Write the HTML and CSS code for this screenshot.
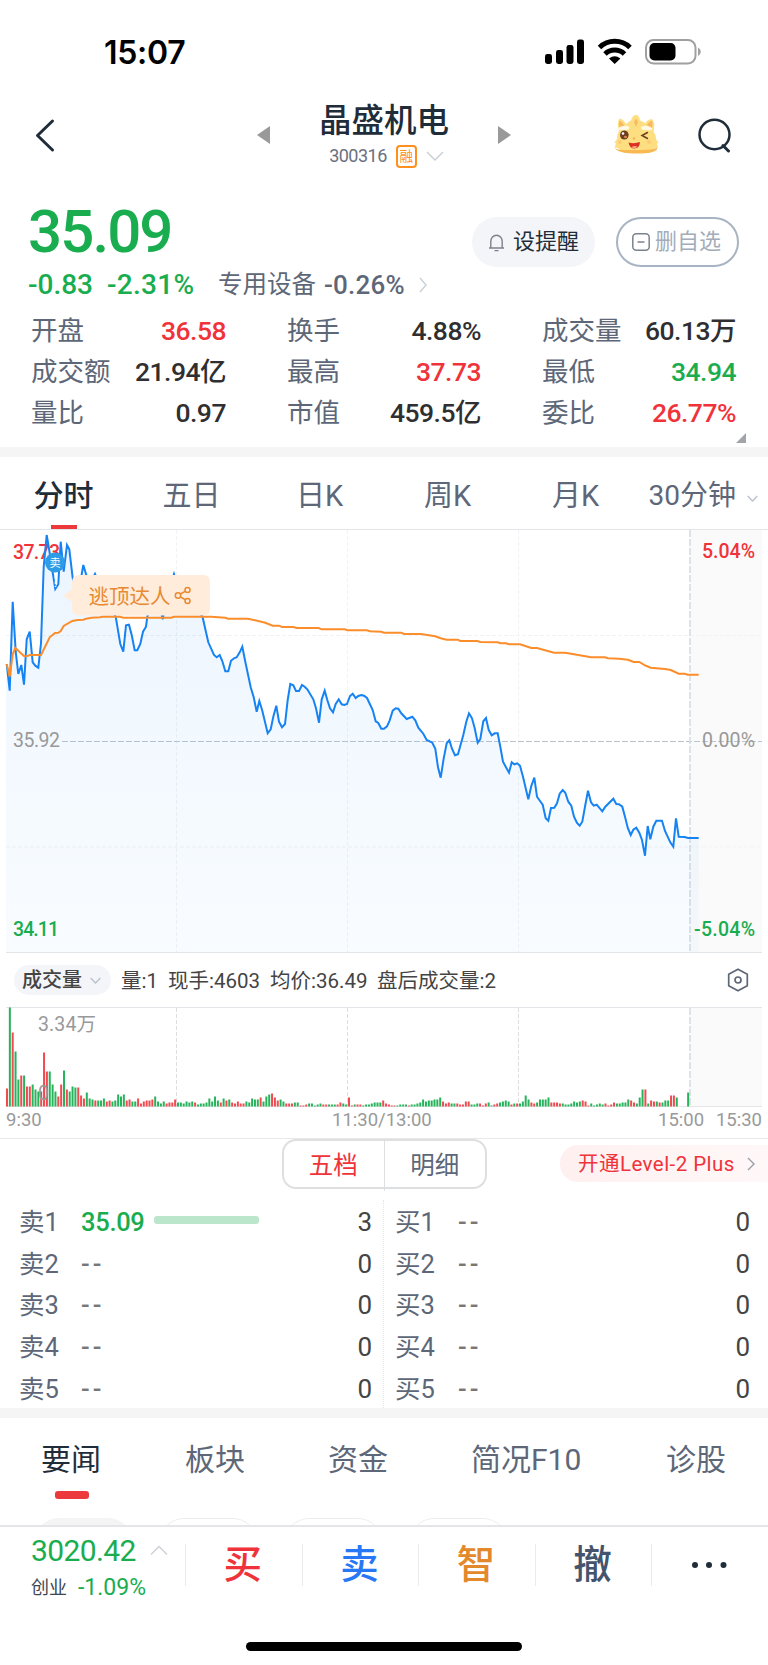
FILE: index.html
```html
<!DOCTYPE html>
<html lang="zh-CN">
<head>
<meta charset="utf-8">
<title>晶盛机电 300316</title>
<link rel="stylesheet" href="styles.css">
</head>
<body>
<div class="screen">
  <div class="statusbar">
    <span class="clock">15:07</span>
    <svg class="status-icons" width="160" height="30" viewBox="542 36 160 30">
      <g fill="#000"><rect x="545" y="54" width="7" height="10" rx="2.4"/><rect x="556" y="50" width="7" height="14" rx="2.4"/><rect x="566.500" y="45" width="7" height="19" rx="2.400"/><rect x="577" y="39.500" width="7" height="24.500" rx="2.400"/></g>
      <g fill="none" stroke="#000" stroke-width="5"><path d="M599.500 47.500a22 22 0 0 1 30.500 0"/><path d="M605 54a14 14 0 0 1 19.500 0"/></g>
      <path d="M609 58.500q5.700-4.600 11.400 0l-5.700 5.500z"/>
      <rect x="646" y="40" width="49.500" height="23.500" rx="7.500" fill="none" stroke="#a0a0a0" stroke-width="2"/>
      <rect x="649.500" y="43" width="26" height="17.500" rx="4.800"/>
      <path d="M698 47.500q2.800 1.400 2.800 4.200t-2.800 4.200z" fill="#a0a0a0"/>
    </svg>
  </div>

  <div class="navbar">
    <svg class="back" width="24" height="36" viewBox="34 118 24 36"><path d="M52.500 121 37.500 135.500 52.500 150" fill="none" stroke="#1f2d3a" stroke-width="3" stroke-linecap="round" stroke-linejoin="round"/></svg>
    <svg class="tri" width="13" height="18" viewBox="0 0 13 18"><path d="M13 0v18L0 9z" fill="#999"/></svg>
    <div class="name">
      <div class="title">晶盛机电</div>
      <div class="code"><span>300316</span><span class="rong">融</span><svg width="18" height="10" viewBox="0 0 18 10"><path d="M1 1l8 8 8-8" fill="none" stroke="#ccd1d8" stroke-width="1.500"/></svg></div>
    </div>
    <svg class="tri" width="13" height="18" viewBox="0 0 13 18"><path d="M0 0v18l13-9z" fill="#999"/></svg>
    <svg class="dragon" width="48" height="42" viewBox="612 114 48 42">
      <path d="M619 119c3-1 5 2 7 5 2-1.500 3.500-3 5-3.500 1-3.500 2.500-5.500 5-5.500s3.500 2.500 4 5.500c2 .5 4 1.500 5 3 2-3 4.500-5 7.500-4 2.500 4 2 8 1 12 2 2.500 2.500 5 2.500 7.500l2.500 3.500-1.500 1 1 4-3 .5c-4 4-11 4.500-19 4.500s-15-.5-18-4.500l-3.500-.5 1.500-4-1.500-1 2.500-3.500c0-3 .5-5.500 2-8-1.500-4-1.500-8 0-12z" fill="#fddf82"/>
      <path d="M614.500 148.500c5 2 12 1.500 21 1.500s17 0 22-2.500l-1 2.500c-5 3.500-12 3.500-20.500 3.500s-16-.5-21.500-5z" fill="#f9b952"/>
      <path d="M619.500 120.500c2.500 1 3.500 3 4.500 5l-4 3.500c-1-3-1.500-6-.5-8.500zM652 120.500c-2.500 1-4 2.500-5 4.500l4.500 4c1-3 1.500-6 .5-8.500zM636 118.500l2 3.500-2 5-2-5z" fill="#f8ba60"/>
      <path d="M618 129c1.500-3 8-4 11-2.500 1.500 2-1 4-3.500 3.500-3-.5-6 1.500-7.500-1zM652.500 129c-1.500-3-8-4-11-2.500-1.500 2 1 4 3.500 3.500 3-.5 6 1.500 7.500-1z" fill="#fff8e2"/>
      <ellipse cx="624.300" cy="135" rx="4.300" ry="4.500" fill="#6e3d22"/><circle cx="623" cy="133.500" r="1.300" fill="#fff"/><ellipse cx="625.500" cy="137" rx="1.500" ry="1.200" fill="#d98a58"/>
      <path d="M647.500 132.500l-5.500 3 5.500 3" fill="none" stroke="#684022" stroke-width="1.500" stroke-linecap="round"/>
      <path d="M628.500 142.500q6 1.500 11.500-.5-.5 6.500-5.500 6.500t-6-6z" fill="#d93222"/><path d="M631.500 147q3-1.500 6-.5-3 3.500-6 .5z" fill="#ff9c8c"/>
      <circle cx="620" cy="142" r="2" fill="#ffc978"/><circle cx="649" cy="142" r="2" fill="#ffc978"/><circle cx="634" cy="138.500" r="1.200" fill="#f9ae5e"/>
    </svg>
    <svg class="search" width="34" height="36" viewBox="698 117 34 36"><ellipse cx="714.500" cy="134.500" rx="15" ry="14.700" fill="none" stroke="#1f2d3a" stroke-width="2.500"/><path d="M723 145.500l5.500 5.500" stroke="#1f2d3a" stroke-width="3" stroke-linecap="round"/></svg>
  </div>

  <div class="quote">
    <div class="quote-main">
      <div class="price">35.09</div>
      <div class="change"><span class="d1">-0.83</span><span class="d2">-2.31%</span><span class="sector">专用设备</span><span class="sector-num">-0.26%</span><svg width="8" height="16" viewBox="0 0 8 16"><path d="M1 1l6 7-6 7" fill="none" stroke="#ccd1d8" stroke-width="1.500"/></svg></div>
    </div>
    <div class="actions">
      <div class="pill alert"><svg width="17" height="19" viewBox="0 0 17 19"><path d="M1 15h15M2.800 15V8.500a5.700 6.300 0 0 1 11.400 0V15M6.500 17.600h4" fill="none" stroke="#7c828d" stroke-width="1.400"/></svg><span>设提醒</span></div>
      <div class="pill remove"><svg width="18" height="18" viewBox="0 0 18 18"><rect x=".8" y=".8" width="16.400" height="16.400" rx="3.500" fill="none" stroke="#7c828d" stroke-width="1.500"/><path d="M5.500 9h7" stroke="#7c828d" stroke-width="1.500"/></svg><span>删自选</span></div>
    </div>
  </div>

  <div class="stats">
    <div class="stat"><span>开盘</span><b class="up">36.58</b></div><div class="stat"><span>换手</span><b>4.88%</b></div><div class="stat"><span>成交量</span><b>60.13万</b></div>
    <div class="stat"><span>成交额</span><b>21.94亿</b></div><div class="stat"><span>最高</span><b class="up">37.73</b></div><div class="stat"><span>最低</span><b class="down">34.94</b></div>
    <div class="stat"><span>量比</span><b>0.97</b></div><div class="stat"><span>市值</span><b>459.5亿</b></div><div class="stat"><span>委比</span><b class="up">26.77%</b></div>
  </div>
  <div class="corner"><svg width="10" height="10" viewBox="0 0 10 10"><path d="M10 0v10H0z" fill="#a1a4a8"/></svg></div>
  <div class="band"></div>

  <div class="ktabs">
    <span class="on">分时</span><span>五日</span><span>日K</span><span>周K</span><span>月K</span><span class="mins">30分钟</span><svg width="11" height="7" viewBox="0 0 11 7"><path d="M.7 1l4.800 5 4.800-5" fill="none" stroke="#b9c2cf" stroke-width="1.400"/></svg>
  </div>

  <svg class="chart" width="768" height="423" viewBox="0 530 768 423">
    <defs><linearGradient id="area" x1="0" y1="0" x2="0" y2="1"><stop offset="0" stop-color="#1a80f0" stop-opacity=".085"/><stop offset="1" stop-color="#2a9bff" stop-opacity=".03"/></linearGradient></defs>
    <rect x="690" y="530" width="66.500" height="423" fill="#fafafa"/><rect x="756" y="530" width="6" height="423" fill="#fafafa"/>
    <g stroke="#f1f3f5" stroke-width="1" stroke-dasharray="4 2"><path d="M6 635.500H762M6 847H762M176.500 530V953M347.500 530V953M518.500 530V953"/></g>
    <path d="M62 741.500H762" stroke="#bcc5cd" stroke-width="1.200" stroke-dasharray="6 2"/>
    <path d="M690 530V953" stroke="#d5dde5" stroke-width="1.600" stroke-dasharray="7 2"/>
    <path id="fill" fill="url(#area)"/>
    <rect x="6" y="952" width="756" height="1.500" fill="#e3e6e9"/>
    <g class="axis">
      <text class="t-up" x="13" y="558.500" textLength="47">37.73</text><text class="t-mute" x="13" y="747" textLength="47">35.92</text><text class="t-down" x="13" y="936" textLength="46">34.11</text>
    </g>
    <path id="price-line" fill="none" stroke="#1683f3" stroke-width="2"/>
    <path d="M55.500 571v16" stroke="#fff" stroke-width="1.500" stroke-dasharray="3 2"/>
    <circle cx="55" cy="562.500" r="10" fill="#2e9be6"/><text class="sell" x="49.500" y="567">卖</text>
    <path d="M63 595.500l9-6v-7q0-7.500 7-7.500h124q7 0 7 7v26.500q0 7-7 7H79q-7 0-7-7V601.500z" fill="#ffecdb"/>
    <text class="tip" x="88.500" y="604" textLength="82">逃顶达人</text>
    <g fill="none" stroke="#e78a31" stroke-width="1.500"><circle cx="178" cy="595.500" r="2.700"/><circle cx="187.500" cy="590" r="2.500"/><circle cx="187.500" cy="601" r="2.500"/><path d="M180.500 594l5-2.800M180.500 597l5 2.800"/></g>
    <path id="avg-line" fill="none" stroke="#fb8d2b" stroke-width="2"/>
    <g class="axis">
      <text class="t-up" x="702" y="558" textLength="53">5.04%</text><text class="t-mute" x="702" y="747" textLength="53">0.00%</text><text class="t-down" x="694" y="936" textLength="61">-5.04%</text>
    </g>
  </svg>

  <div class="volhead">
    <div class="volpick">成交量<svg width="11" height="7" viewBox="0 0 11 7"><path d="M.7 1l4.800 5 4.800-5" fill="none" stroke="#b9c2cf" stroke-width="1.400"/></svg></div>
    <span class="v1">量:1</span><span class="v2">现手:4603</span><span class="v3">均价:36.49</span><span class="v4">盘后成交量:2</span>
    <svg class="hex" width="22" height="24" viewBox="0 0 22 24"><path d="M11 1.200 20.300 6.200V17.800L11 22.800 1.700 17.800V6.200z" fill="none" stroke="#5d6778" stroke-width="1.700" stroke-linejoin="round"/><circle cx="11" cy="12" r="3" fill="none" stroke="#5d6778" stroke-width="1.700"/></svg>
  </div>
  <svg class="chart" width="768" height="100" viewBox="0 1007 768 100">
    <rect x="690" y="1007" width="72" height="100" fill="#fafafa"/>
    <path d="M6 1007.500H762M6 1106.500H762" stroke="#e3e5e8"/>
    <path d="M176.500 1008V1106M347.500 1008V1106M518.500 1008V1106" stroke="#dedede" stroke-dasharray="4 2"/>
    <path d="M690 1008V1106" stroke="#d5dde5" stroke-width="1.600" stroke-dasharray="7 2"/>
    <path id="vol-up" fill="#f04b51"/><path id="vol-down" fill="#27b35b"/>
    <g class="axis"><text class="t-mute" x="38" y="1031" textLength="58">3.34万</text><text class="t-mute" x="38" y="1099.500">0</text></g>
  </svg>
  <div class="times"><span>9:30</span><span>11:30/13:00</span><span class="end">15:00</span><span>15:30</span></div>

  <div class="book-head">
    <div class="seg"><span class="sel">五档</span><span>明细</span></div>
    <div class="level2">开通Level-2 Plus<svg width="8" height="14" viewBox="0 0 8 14"><path d="M1 1l6 6-6 6" fill="none" stroke="#9a9ea6" stroke-width="1.400"/></svg></div>
  </div>
  <div class="book">
    <div class="side ask">
      <div class="row"><span>卖1</span><b class="down">35.09</b><i class="depth"></i><em>3</em></div>
      <div class="row"><span>卖2</span><b>--</b><em>0</em></div>
      <div class="row"><span>卖3</span><b>--</b><em>0</em></div>
      <div class="row"><span>卖4</span><b>--</b><em>0</em></div>
      <div class="row"><span>卖5</span><b>--</b><em>0</em></div>
    </div>
    <div class="side bid">
      <div class="row"><span>买1</span><b>--</b><em>0</em></div>
      <div class="row"><span>买2</span><b>--</b><em>0</em></div>
      <div class="row"><span>买3</span><b>--</b><em>0</em></div>
      <div class="row"><span>买4</span><b>--</b><em>0</em></div>
      <div class="row"><span>买5</span><b>--</b><em>0</em></div>
    </div>
  </div>
  <div class="band"></div>

  <div class="ntabs"><span class="on">要闻</span><span>板块</span><span>资金</span><span>简况F10</span><span>诊股</span></div>
  <div class="chips"><i class="solid"></i><i></i><i></i><i></i></div>

  <div class="tradebar">
    <div class="index">
      <div class="index-top"><span>3020.42</span><svg width="18" height="10" viewBox="0 0 18 10"><path d="M1 9.500l8-8 8 8" fill="none" stroke="#ccd1d8" stroke-width="1.400"/></svg></div>
      <div class="index-sub"><span>创业</span><b>-1.09%</b></div>
    </div>
    <div class="act buy">买</div><div class="act sell-btn">卖</div><div class="act smart">智</div><div class="act cancel">撤</div>
    <div class="act more"><svg width="36" height="8" viewBox="0 0 36 8"><g fill="#1f2d3a"><circle cx="4" cy="4" r="3"/><circle cx="18" cy="4" r="3"/><circle cx="32.500" cy="4" r="3"/></g></svg></div>
  </div>
  <div class="home"></div>
</div>
<script src="chart.js"></script>
</body>
</html>
```
FILE: styles.css
```css
* { box-sizing: border-box; }
body { margin: 0; background: #fff; font-family: Roboto, "Noto Sans CJK SC", sans-serif; color: #333; }
svg { display: block; flex: none; }
b { font-weight: 500; }
i, em { font-style: normal; }
.screen { width: 768px; height: 1665px; overflow: hidden; display: flex; flex-direction: column; white-space: nowrap; }
.screen > * { flex: none; }

.statusbar { height: 100px; padding: 36px 66px 0 104px; display: flex; justify-content: space-between; align-items: flex-start; }
.clock { font: 600 32px/34px Inter, sans-serif; color: #000; letter-spacing: -0.3px; }

.navbar { height: 90px; display: flex; align-items: flex-start; padding-left: 34px; }
.back { margin-top: 18px; }
.tri { margin-top: 26px; }
.back + .tri { margin-left: 199px; }
.name { width: 228px; display: flex; flex-direction: column; align-items: center; }
.title { margin-top: 2px; font-size: 32.500px; line-height: 38px; font-weight: 500; color: #1f2d3a; }
.code { display: flex; align-items: center; margin: 4px 0 0 5px; height: 24px; gap: 9px; font-size: 18px; line-height: 24px; color: #6b7080; letter-spacing: -0.5px; }
.rong { width: 21px; height: 23px; border: 2px solid #ff8f1f; border-radius: 4px; font-size: 13.500px; line-height: 19px; text-align: center; color: #ff8f1f; letter-spacing: 0; display: flex; justify-content: center; }
.dragon { margin: 14px 0 0 101px; }
.search { margin: 17px 0 0 38px; }

.quote { height: 124px; display: flex; justify-content: space-between; padding: 0 29px 0 28px; }
.price { margin-top: 11px; height: 60px; font-size: 60px; line-height: 62px; font-weight: 500; letter-spacing: -1.900px; color: #1aad50; }
.change { display: flex; align-items: center; height: 32px; margin-top: 8px; line-height: 32px; font-size: 28px; color: #1aad50; font-weight: 500; }
.d1 { width: 79px; letter-spacing: 0; }
.d2 { width: 111px; letter-spacing: 0.3px; }
.sector { width: 106px; font-size: 24.500px; font-weight: 400; color: #5d6778; }
.sector-num { width: 95px; font-size: 26px; color: #5d6778; letter-spacing: 0.2px; }
.actions { display: flex; gap: 21px; margin-top: 27px; }
.pill { height: 50px; width: 123px; border-radius: 25px; display: flex; align-items: center; font-size: 22px; }
.pill span { line-height: 30px; margin-top: -1px; }
.alert { background: #f4f5f8; color: #1f2d3a; padding-left: 16px; gap: 8px; }
.remove { border: 2px solid #a9b4c2; color: #a3adba; padding-left: 14px; gap: 5px; }

.stats { display: grid; grid-template-columns: 195px 194px 194px; grid-auto-rows: 41px; column-gap: 61px; padding-left: 31px; margin-top: -4px; }
.stat { display: flex; justify-content: space-between; align-items: center; line-height: 43px; }
.stat span { font-size: 26.500px; color: #5d6778; }
.stat b { font-size: 26.500px; color: #2f2f31; letter-spacing: -0.5px; }
.stat b.up, .up { color: #f0333a; }
.stat b.down, .down { color: #1aad50; }
.corner { height: 14px; padding: 0 22px 0 0; display: flex; justify-content: flex-end; }
.band { height: 10px; background: #f5f5f5; }

.ktabs { height: 73px; display: grid; grid-template-columns: 128px 128px 128px 128px 128px 96px 12px; border-bottom: 1px solid #e3e5e8; font-size: 29px; line-height: 78px; text-align: center; color: #5d6778; }
.ktabs span { padding-right: 1px; }
.ktabs .on { color: #1f2d3a; font-weight: 500; font-size: 30px; display: flex; flex-direction: column; align-items: center; height: 72px; }
.ktabs .on::after { content: ""; width: 26px; height: 4px; background: #ec3a3c; margin-top: -10px; flex: none; }
.ktabs .mins { padding: 0; text-align: right; font-size: 28px; }
.ktabs svg { margin: 38px 0 0 11px; }

.axis text { font: 500 19.500px Roboto, "Noto Sans CJK SC", sans-serif; }
.axis .t-up { fill: #f0333a; }
.axis .t-down { fill: #1aad50; }
.axis .t-mute { fill: #999; font-weight: 400; }
.sell { font: 11px "Noto Sans CJK SC", sans-serif; fill: #fff; }
.tip { font: 20.500px "Noto Sans CJK SC", sans-serif; fill: #e78a31; }

.volhead { height: 54px; display: flex; align-items: center; padding-left: 14px; font-size: 20.500px; color: #444; line-height: 32px; }
.volpick { width: 97px; height: 30px; border-radius: 15px; background: #f4f5f8; padding-left: 8px; display: flex; align-items: center; gap: 8px; font-weight: 500; font-size: 20px; }
.volhead > span { margin: 1px 0 0 10px; }
.volhead .v1 { width: 37px; }
.volhead .v2 { width: 92px; }
.volhead .v3 { width: 97px; }
.volhead .v4 { width: 350px; }
.times { height: 32px; border-bottom: 1px solid #e8e8e8; display: grid; grid-template-columns: 326px 304px 68px 58px; padding: 0 0 3px 6px; font-size: 18.500px; line-height: 27px; color: #999; }
.times .end { padding-left: 22px; }
.times span:last-child { text-align: right; }

.book-head { height: 61px; display: flex; padding-left: 282px; }
.seg { width: 205px; height: 50px; border: 2px solid #dedfe1; border-radius: 14px; display: grid; grid-template-columns: 1fr 1fr; text-align: center; font-size: 24.500px; line-height: 50px; color: #5d6778; }
.seg .sel { color: #f0333a; border-right: 1px solid #dedfe1; padding-right: 1px; }
.level2 { margin: 6px 0 0 73px; width: 208px; height: 37px; border-radius: 18px 0 0 18px; background: linear-gradient(90deg, #fff0f0, #fff8f8); padding-left: 18px; display: flex; align-items: center; gap: 12px; font-size: 20.500px; line-height: 38px; color: #f0333a; font-weight: 400; letter-spacing: 0.45px; }
.book { display: grid; grid-template-columns: 384px 384px; height: 208px; }
.side { display: grid; grid-template-rows: repeat(5, 41.700px); }
.ask { padding: 0 11px 0 20px; border-right: 1px dotted #e4e6e9; }
.bid { padding: 0 18px 0 12px; }
.row { display: flex; align-items: center; font-size: 25.500px; line-height: 42px; padding-top: 2px; color: #5d6778; }
.row span { width: 61px; margin-left: -1px; }
.row b { width: 73px; letter-spacing: -0.3px; margin-left: 1px; }
.row b:not(.down) { font-weight: 500; letter-spacing: 3px; color: #777; }
.bid .row b { margin-left: 2px; }
.row em { margin-left: auto; color: #444; font-size: 26px; }
.depth { width: 105px; height: 8px; border-radius: 3px; background: #bce6cc; margin-top: -4px; }

.ntabs { height: 100px; display: grid; grid-template-columns: 144px 143px 143px 195px 102px; padding-left: 41px; font-size: 30px; line-height: 84px; color: #5d6778; }
.ntabs .on { color: #1f2d3a; font-weight: 400; }
.ntabs .on::after { content: ""; display: block; width: 34px; height: 8px; border-radius: 3px; background: #ec3a3c; margin: -11px 0 0 14px; }
.chips { height: 8px; overflow: hidden; display: flex; gap: 26px; padding-left: 34px; }
.chips i { width: 99px; height: 50px; flex: none; border: 1.500px solid #ededed; border-radius: 25px; }
.chips .solid { background: #f4f4f4; border-color: #f4f4f4; }

.tradebar { height: 107px; margin-top: -1px; border-top: 2px solid #e3e5e8; background: #fff; display: flex; padding-left: 31px; }
.index { width: 154px; color: #1aad50; }
.index-top { height: 46px; line-height: 47px; font-size: 30px; letter-spacing: -0.6px; display: flex; gap: 13px; }
.index-top span { width: 106px; }
.index-top svg { margin-top: 18px; }
.index-sub { display: flex; gap: 11px; font-size: 18px; line-height: 29px; color: #3d4655; }
.index-sub b { color: #1aad50; font-size: 23px; font-weight: 400; }
.act { width: 116.600px; height: 42px; margin-top: 17px; border-left: 1px solid #e9ebed; display: flex; align-items: center; justify-content: center; padding-right: 2px; font-size: 38.500px; line-height: 40px; font-weight: 500; }
.buy { color: #f0333a; }
.sell-btn { color: #2878f5; }
.smart { color: #e3882b; }
.cancel { color: #44546d; }
.home { width: 276px; height: 9px; border-radius: 5px; background: #000; margin: 10px auto 0 246px; }
```
FILE: chart.js
```js
const price = `6.7,664 9.7,690.7 12.7,601.7 15.7,651.7 18.3,674 21.3,665 24,684.7 26.7,639.3 29.7,631.7 32.7,662.3 35.3,665.7 38.3,667.7 41,643.3 43.7,566.7 46.7,535 49.7,553 52.3,570 55.3,589 58.3,584.3 60.7,541.7 63.7,571.7 67,545 69.3,549.3 72.7,578 78,596 83.3,565 86.3,575 90,584 95,574 106,600 115.7,616.7 120.3,644 123.3,651.7 126,625.3 129,624.7 131.7,635 134.7,650.3 137.3,650.3 140.3,644 143,631.7 146,626.7 147.3,616.7 152,600 160,606 162.7,619.3 166,600 174,574 180,592 190,600 202.5,616.7 208.3,642.3 214,655 216.7,657.3 219.7,655 222.3,661 225.3,671.3 228.3,671.3 231,660.7 234,658.3 236.7,657.3 239.7,652.3 242.3,646.7 245.3,661.7 250.7,687.3 253.7,697.3 256.7,711.7 259.3,701 262.3,710.7 267.7,733.3 270.7,729.3 273.3,716.7 276.3,705.7 279,721.7 282,727.3 285,724 287.7,700 290.3,684 293.3,685.3 296,691 299,691 302,685 304.7,686.7 307.3,689.3 313.3,699.3 316,708.3 319,722.7 321.7,699.3 324.7,690.7 327.3,700 330,708.3 333,712.3 335.7,704 338.7,699.3 341.7,704.3 344.3,705 347,704 350,696 352.7,693.7 355.7,698 358.3,696 361.3,695 364,695.7 367,698 372.7,710 375.7,721.3 378.3,723 381.3,728.7 384,728.7 387,726.3 389.7,720.3 392.7,710.7 395.7,708.3 398.3,708.7 401.3,713.3 406.7,719 412.3,716.7 415.3,720.3 418.3,727.7 423.3,733.7 426.7,740 432.3,742.7 435.3,748.7 438,767.3 440.7,777.7 443.7,758.3 446.7,743.3 449.3,740.3 452,748.7 455,755.3 458,754.3 463.3,735 466.3,721.7 469,713.3 472,718.3 474.7,728.3 477.7,742.7 480.3,739 483.3,721.3 486,718 488.7,730 491.7,735.3 494.7,733.3 497.7,733.3 500.3,746.7 503,761.7 506,767.3 509,772.7 511.7,762.3 514.3,764.3 517.3,763.3 520,765.7 523,776.7 528.3,799.3 531.3,786 534.3,777.7 537,796.7 540,801 542.7,804.7 545.7,818.3 548.3,820.7 551,808 554.3,807.7 557,803.3 559.7,793.7 562.7,790 565.3,792.7 568.3,801.7 571.3,805.7 574,816.7 577,823 579.7,825.7 582.3,821.7 585.3,805 588,790.7 591,802.3 593.7,805.7 596.7,804.7 602.3,811.3 605.3,806.7 613.3,798.7 616.3,804 619,804.3 622.3,806.7 625,816.7 627.7,827.7 630.7,835 633.3,829.7 636.3,827.7 639.3,832.7 642,840 645,855.7 647.7,826 650.3,839.3 653.3,826.7 656.3,820.7 662,820.7 665,831 670.3,842.3 673.3,846.7 676,818.3 678.7,836.7 684.7,837 688,838 698.7,838`;
const average = `6.7,664 9.7,676.7 12.7,654.3 15.3,648 24,656 26.7,656.3 29.7,655 41,655 49.7,637.3 55,633 58.3,632.7 60.7,631 63.7,626 72.3,621 77.7,620 83.3,619.7 86,618.7 91.7,617.7 100,617.3 102.7,616.7 120,616.7 123.3,617.7 171.3,617.7 174,616.7 211.3,616.7 225.3,617.7 228,618.7 248,618.7 265.3,622.7 272.7,625.7 279,625.7 282,627 293.3,627 296.7,628 318.7,628 321.7,629.3 344.7,629.3 347.3,630.3 366.7,630.3 370,631.3 381.3,631.7 384,632.7 401.3,632.7 404,634 420.7,634 435.3,636.3 440.7,638.3 446.7,639.7 457.7,639.7 460.3,641 477.3,641 480.3,642 497.7,642.3 500.7,643.3 506,643.3 509,644.3 520,644.3 531.3,648 537,648 554,652.7 565.3,652.7 591,657.3 605,657.3 608,658.3 619.3,658.7 628,659.7 633.7,662 639.3,662 645,665.3 650.7,667.7 665,669 670.7,670 678.7,673.7 684.7,673.7 687.7,674.7 698.7,674.7`;
const set = (id, d) => document.getElementById(id).setAttribute('d', d);
set('price-line', 'M' + price);
set('avg-line', 'M' + average);
set('fill', 'M6,953 L6,664 ' + price + ' 698.7,953Z');

// One entry per minute: r = rising, g = falling, followed by the bar height.
const volume = `r18 g99 r74 g55 g27 r31 g31 r20 r20 g22 g17 g15 r15 r54 r35 g35 g22 g15 r10 r22 g36 r17 g15 g20 g19 r19 r11 r8 g14 g8 g7 r6 g6 g6 g8 r5 r6 g5 g6 g12 g10 g12 r6 r7 g5 g5 r8 r3 r5 r6 r6 r7 g10 g5 g3 g5 r3 r4 r4 r7 g4 g4 g3 g5 g4 g5 r4 g2 g3 g3 g4 g8 g5 g10 g6 r4 g8 r6 g7 r4 r3 r5 r3 r3 g5 g4 g8 g7 g7 r9 g5 g10 g12 r13 r9 r6 g7 g5 r3 r3 r3 g4 g4 r1 r1 r2 g3 g3 g1 g2 g3 r2 r2 g2 g2 g2 r2 r4 g3 g2 r9 r1 g2 r2 r2 g1 g2 g2 g3 g4 g4 g4 r6 r3 r2 r1 r1 g1 g2 g2 g2 r1 g2 g2 g3 g4 g7 g5 g6 g6 g7 g7 g9 r5 r3 r4 g3 g3 r3 r2 r2 r5 r5 g2 g2 g3 r3 r1 r3 g4 g1 r2 r3 g4 g5 g6 g5 r2 g3 r3 g3 g5 g11 g7 r4 r3 g4 g7 g7 g7 g9 r4 r4 r4 r3 g3 g2 g2 g3 g5 g4 g5 r6 r5 r1 g3 g1 g2 g3 g2 r3 r1 r2 r4 g3 g3 g4 g4 g7 r6 r4 g3 g9 g17 r17 g3 r6 r5 g5 r4 g4 g6 g6 r11 r11 g9 g0 g0 g0 g14`.split(' ');
const bars = { r: '', g: '' };
volume.forEach((v, i) => {
  const h = +v.slice(1);
  if (h) bars[v[0]] += `M${(6 + i * 2.85).toFixed(2)} 1106.5v-${h}h2v${h}z`;
});
set('vol-up', bars.r);
set('vol-down', bars.g);
```
